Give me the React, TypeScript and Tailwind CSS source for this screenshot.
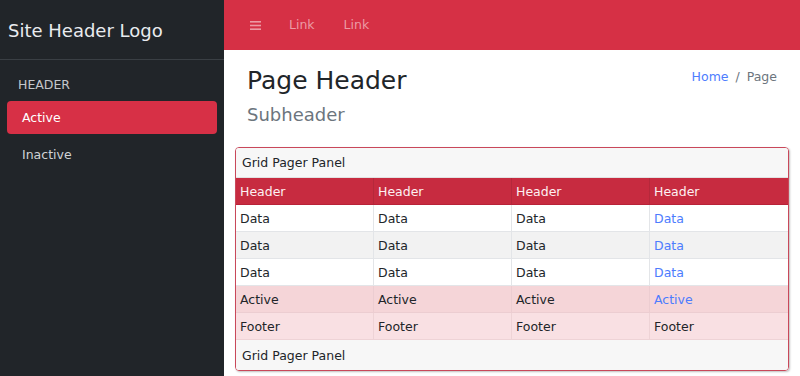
import React from "react";

const font = { fontFamily: '"DejaVu Sans", Verdana, sans-serif' };

type Cell = { text: string; link?: boolean };

function Row({ cells, bg, textCls, border }: { cells: Cell[]; bg: string; textCls: string; border: string }) {
  return (
    <div className={`grid grid-cols-4 h-[27px] ${bg} border-b ${border}`}>
      {cells.map((c, i) => (
        <div
          key={i}
          className={`flex items-center pl-[4px] pt-[2px] ${i < 3 ? "border-r " + border : ""} ${c.link ? "text-[#4d7cfe]" : textCls}`}
        >
          {c.text}
        </div>
      ))}
    </div>
  );
}

export default function App() {
  const data: Cell[] = [{ text: "Data" }, { text: "Data" }, { text: "Data" }, { text: "Data", link: true }];
  return (
    <div className="flex w-[800px] h-[376px] overflow-hidden text-[12.5px]" style={font}>
      <aside className="w-[224px] shrink-0 bg-[#212529] flex flex-col">
        <div className="h-[60px] border-b border-[#3a3f44] flex items-center pl-[8px] pt-[1px] text-[18px] text-[#e9ecef]">
          Site Header Logo
        </div>
        <div className="pt-[16px] pl-[18px] text-[#c4c8cc] leading-[18px]">HEADER</div>
        <div className="mt-[7px] mx-[7px] h-[33px] rounded-[4px] bg-[#d73046] flex items-center pl-[15px] pt-[2px] text-white">
          Active
        </div>
        <div className="mt-[4px] pl-[22px] pt-[2px] h-[33px] flex items-center text-[#d0d3d6]">Inactive</div>
      </aside>
      <main className="flex-1 flex flex-col bg-white">
        <nav className="h-[50px] bg-[#d63045] flex items-center pl-[26px] text-[#ec9aa4]">
          <svg width="11" height="9" viewBox="0 0 11 9" className="mr-[28px] mt-[1px]">
            <rect x="0" y="0" width="11" height="1.6" fill="#ec9aa4" />
            <rect x="0" y="3.7" width="11" height="1.6" fill="#ec9aa4" />
            <rect x="0" y="7.4" width="11" height="1.6" fill="#ec9aa4" />
          </svg>
          <span className="mr-[29px]">Link</span>
          <span>Link</span>
        </nav>
        <div className="px-[11px]">
          <div className="flex justify-between px-[12px] pt-[16px]">
            <div>
              <div className="text-[25px] leading-[30px] text-[#212529]">Page Header</div>
              <div className="mt-[7px] text-[18px] leading-[24px] text-[#6c757d]">Subheader</div>
            </div>
            <div className="pt-[2px] leading-[18px] text-[#6c757d]">
              <span className="text-[#4d7cfe]">Home</span>
              <span className="mx-[7px]">/</span>
              <span>Page</span>
            </div>
          </div>
          <div className="mt-[20px] border border-[#c9485a] rounded-[4px] overflow-hidden shadow-[1px_1px_2px_rgba(0,0,0,0.25)] text-[#212529]">
            <div className="h-[30px] bg-[#f7f7f7] border-b border-[#e2e2e2] flex items-center pl-[6px] pt-[2px]">
              Grid Pager Panel
            </div>
            <div className="grid grid-cols-4 h-[27px] bg-[#c72b40] text-[#fdf1f2] border-b border-[#b82238]">
              {[0, 1, 2, 3].map((i) => (
                <div key={i} className={`flex items-center pl-[4px] pt-[2px] ${i < 3 ? "border-r border-[#b5283b]" : ""}`}>
                  Header
                </div>
              ))}
            </div>
            <Row cells={data} bg="bg-white" textCls="text-[#212529]" border="border-[#e3e5e8]" />
            <Row cells={data} bg="bg-[#f2f2f2]" textCls="text-[#212529]" border="border-[#e3e5e8]" />
            <Row cells={data} bg="bg-white" textCls="text-[#212529]" border="border-[#e3e5e8]" />
            <Row
              cells={[{ text: "Active" }, { text: "Active" }, { text: "Active" }, { text: "Active", link: true }]}
              bg="bg-[#f5d5d8]"
              textCls="text-[#212529]"
              border="border-[#eccdd1]"
            />
            <Row
              cells={[{ text: "Footer" }, { text: "Footer" }, { text: "Footer" }, { text: "Footer" }]}
              bg="bg-[#f9e0e3]"
              textCls="text-[#212529]"
              border="border-[#eed3d6]"
            />
            <div className="h-[30px] bg-[#f7f7f7] flex items-center pl-[6px] pt-[2px]">Grid Pager Panel</div>
          </div>
        </div>
      </main>
    </div>
  );
}
